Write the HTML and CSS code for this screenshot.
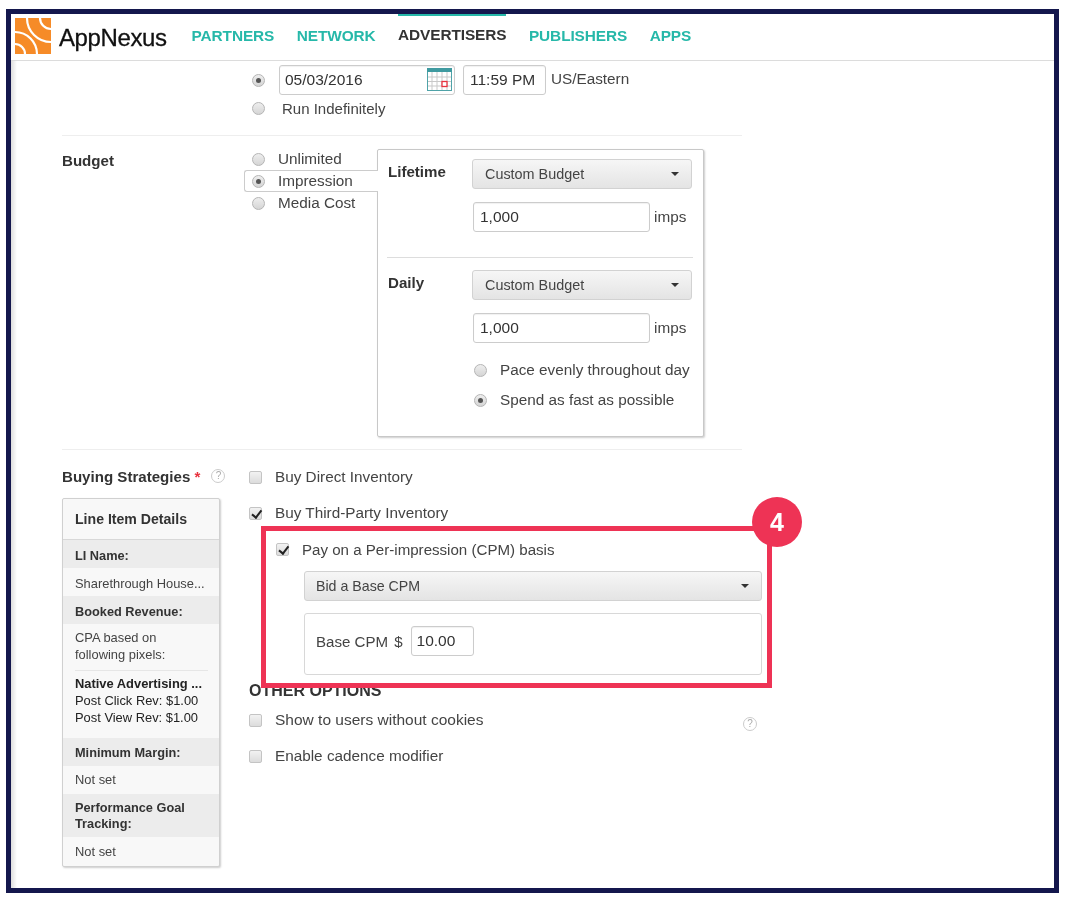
FILE: index.html
```html
<!DOCTYPE html>
<html lang="en">
<head>
<meta charset="utf-8">
<title>AppNexus</title>
<link rel="stylesheet" href="styles.css">
</head>
<body>
<div class="frame">
  <header class="topbar">
    <svg class="logo" viewBox="0 0 36 36" aria-hidden="true">
      <rect width="36" height="36" fill="#f68b28"/>
      <g fill="none" stroke="#fff" stroke-width="2.200">
        <path d="M25 0A11 11 0 0 0 36 11"/>
        <path d="M12 0A24 24 0 0 0 36 24"/>
        <path d="M0 26A10 10 0 0 1 10 36"/>
        <path d="M0 14A22 22 0 0 1 22 36"/>
      </g>
    </svg>
    <span class="brand">AppNexus</span>
    <nav class="nav">
      <a class="nav-link">PARTNERS</a>
      <a class="nav-link">NETWORK</a>
      <a class="nav-link active">ADVERTISERS</a>
      <a class="nav-link">PUBLISHERS</a>
      <a class="nav-link">APPS</a>
    </nav>
  </header>

  <main class="content">
    <section class="schedule">
      <div class="sched-line">
        <span class="radio on"></span>
        <div class="input date">05/03/2016
          <svg class="cal" viewBox="0 0 25 23" aria-hidden="true">
            <rect x=".5" y=".5" width="24" height="22" fill="#fff" stroke="#4fa3a8"/>
            <rect width="25" height="4" fill="#3f9aa0"/>
            <path d="M5 4v18M10 4v18M15 4v18M20 4v18M1 9h23M1 13.500h23M1 18h23" stroke="#c9c9c9" stroke-width="1"/>
            <rect x="15" y="13.500" width="5" height="5" fill="#fff" stroke="#e8333f" stroke-width="1.300"/>
          </svg>
        </div>
        <div class="input time">11:59 PM</div>
        <span class="tz">US/Eastern</span>
      </div>
      <div class="indef"><span class="radio"></span><span class="indef-label">Run Indefinitely</span></div>
    </section>

    <section class="budget">
      <h3 class="row-title budget-title">Budget</h3>
      <div class="budget-body">
        <div class="budget-types">
          <div class="type"><span class="radio"></span>Unlimited</div>
          <div class="type selected"><span class="radio on"></span>Impression</div>
          <div class="type"><span class="radio"></span>Media Cost</div>
        </div>
        <div class="panel">
          <div class="panel-group">
            <strong class="panel-label">Lifetime</strong>
            <div class="panel-fields">
              <div class="select wide">Custom Budget<span class="caret"></span></div>
              <div class="imps"><div class="input amount">1,000</div><span class="unit">imps</span></div>
            </div>
          </div>
          <hr class="panel-rule">
          <div class="panel-group">
            <strong class="panel-label">Daily</strong>
            <div class="panel-fields">
              <div class="select wide">Custom Budget<span class="caret"></span></div>
              <div class="imps"><div class="input amount">1,000</div><span class="unit">imps</span></div>
              <div class="pace first"><span class="radio"></span>Pace evenly throughout day</div>
              <div class="pace"><span class="radio on"></span>Spend as fast as possible</div>
            </div>
          </div>
        </div>
      </div>
    </section>

    <section class="strategies">
      <div class="side">
        <h3 class="row-title strat-title">Buying Strategies <span class="req">*</span><span class="help">?</span></h3>
        <aside class="details">
          <div class="details-head">Line Item Details</div>
          <div class="d-key d-low">LI Name:</div>
          <div class="d-val d-low">Sharethrough House...</div>
          <div class="d-key d-low">Booked Revenue:</div>
          <div class="d-val d-pixels">
            <div class="d-cpa">CPA based on<br>following pixels:</div>
            <div class="d-pixel"><b>Native Advertising ...</b><br>Post Click Rev: $1.00<br>Post View Rev: $1.00</div>
          </div>
          <div class="d-key">Minimum Margin:</div>
          <div class="d-val d-high">Not set</div>
          <div class="d-key d-two">Performance Goal Tracking:</div>
          <div class="d-val">Not set</div>
        </aside>
      </div>
      <div class="options">
        <label class="check"><span class="box"></span>Buy Direct Inventory</label>
        <label class="check"><span class="box on"></span>Buy Third-Party Inventory</label>
        <div class="cpm">
          <label class="check cpm-check"><span class="box on"></span>Pay on a Per-impression (CPM) basis</label>
          <div class="select full">Bid a Base CPM<span class="caret"></span></div>
          <div class="cpm-box">Base CPM<span class="dollar">$</span><div class="input cpm-input">10.00</div></div>
        </div>
        <h4 class="other">OTHER OPTIONS</h4>
        <div class="check-row">
          <label class="check cookies"><span class="box"></span>Show to users without cookies</label>
          <span class="help far">?</span>
        </div>
        <label class="check"><span class="box"></span>Enable cadence modifier</label>
      </div>
    </section>
  </main>

  <div class="callout"></div>
  <div class="badge">4</div>
</div>
</body>
</html>
```

FILE: styles.css
```css
* { box-sizing: border-box; }
html, body { margin: 0; height: 100%; background: #fff; }
body {
  padding: 9px 9px 9px 6px;
  font-family: "Liberation Sans", Arial, sans-serif;
  font-size: 14.400px;
  color: #444;
}
.frame {
  position: relative;
  width: 1053px;
  height: 884px;
  border: 5px solid #14174d;
  background: #fff;
  overflow: hidden;
  filter: blur(.3px);
}
.topbar {
  display: flex;
  align-items: center;
  height: 47px;
  padding-left: 4px;
  border-bottom: 1px solid #dcdcdc;
  box-shadow: 0 1px 2px rgba(0,0,0,.08);
  background: #fff;
}
.logo { width: 36px; height: 36px; flex: none; margin-top: -3px; }
.brand {
  margin-left: 8px;
  font-size: 24px;
  color: #111;
  letter-spacing: -.4px;
  margin-top: 1px;
  -webkit-text-stroke: .3px #111;
}
.nav { display: flex; margin-left: 25px; height: 100%; }
.nav-link {
  margin-right: 22.500px;
  padding-top: 11px;
  font-size: 15.400px;
  font-weight: 700;
  color: #26b8a9;
  border-top: 2px solid transparent;
  letter-spacing: -.1px;
}
.nav-link.active { color: #333; border-top-color: #26b8a9; padding-top: 10px; }

.content {
  height: 827px;
  padding-left: 51px;
  background: linear-gradient(to right, #dedede, #f4f4f4 4px, #fff 6px);
}

.radio {
  display: inline-block;
  flex: none;
  width: 13px;
  height: 13px;
  border-radius: 50%;
  border: 1px solid #b5b5b5;
  background: linear-gradient(#eee, #d5d5d5);
  position: relative;
}
.radio.on::after {
  content: "";
  position: absolute;
  left: 3px;
  top: 3px;
  width: 5px;
  height: 5px;
  border-radius: 50%;
  background: #555;
}
.input {
  background: #fff;
  border: 1px solid #ccc;
  border-radius: 3px;
  box-shadow: inset 0 1px 1px rgba(0,0,0,.06);
  color: #333;
  line-height: 28px;
  font-size: 15.500px;
}

.schedule {
  width: 680px;
  height: 75px;
  padding: 4px 0 0 190px;
  border-bottom: 1px solid #eee;
}
.sched-line { display: flex; align-items: center; height: 30px; }
.date { position: relative; width: 176px; height: 30px; margin-left: 14px; padding-left: 5px; }
.cal { position: absolute; right: 2px; top: 2px; width: 25px; height: 23px; }
.time { width: 83px; height: 30px; margin-left: 8px; padding-left: 6px; }
.tz { margin-left: 5px; font-size: 15.300px; margin-top: -2px; }
.indef { display: flex; align-items: center; height: 18px; margin-top: 4px; font-size: 15px; }
.indef-label { margin-left: 17px; }

.row-title { margin: 0; font-size: 15.100px; font-weight: 700; color: #333; }
.budget {
  display: flex;
  width: 680px;
  height: 314px;
  padding-top: 12px;
  border-bottom: 1px solid #eee;
}
.budget-title { width: 182px; padding-top: 4px; }
.budget-types { width: 134px; position: relative; z-index: 1; margin-right: -1px; }
.budget-body { display: flex; align-items: flex-start; }
.type {
  display: flex;
  align-items: center;
  height: 22px;
  padding-left: 7px;
  gap: 13px;
  font-size: 15.300px;
  border: 1px solid transparent;
  border-right: 0;
}
.type.selected { border-color: #ccc; border-radius: 3px 0 0 3px; background: #fff; }
.panel {
  width: 327px;
  height: 288px;
  margin-top: 1px;
  padding: 9px 11px 0 10px;
  border: 1px solid #c8c8c8;
  border-radius: 2px;
  box-shadow: 1px 1px 2px rgba(0,0,0,.2);
  background: #fff;
}
.panel-group { display: flex; }
.panel-label { width: 84px; padding-top: 4px; color: #333; font-size: 15.100px; }
.panel-fields { width: 220px; }
.select {
  position: relative;
  height: 30px;
  line-height: 29px;
  padding-left: 12px;
  border: 1px solid #d2d2d2;
  border-radius: 3px;
  background: linear-gradient(#f6f6f6, #e4e4e4);
  color: #444;
}
.caret {
  position: absolute;
  right: 12px;
  top: 12px;
  border-left: 4px solid transparent;
  border-right: 4px solid transparent;
  border-top: 4px solid #333;
}
.imps { display: flex; align-items: center; margin: 13px 0 0 1px; }
.amount { width: 177px; height: 30px; padding-left: 6px; }
.unit { margin-left: 4px; font-size: 15.300px; }
.panel-rule { margin: 25px 0 12px -1px; border: 0; border-top: 1px solid #ddd; width: 306px; }
.pace { display: flex; align-items: center; gap: 13px; height: 30px; margin-left: 2px; font-size: 15.300px; white-space: nowrap; }
.pace.first { margin-top: 12px; }

.strategies { display: flex; width: 700px; padding-top: 17px; }
.side { width: 187px; }
.strat-title { display: flex; align-items: center; height: 18px; white-space: pre; }
.req { color: #e8333f; }
.help {
  display: inline-block;
  width: 14px;
  height: 14px;
  line-height: 12px;
  margin-left: 11px;
  border: 1px solid #ccc;
  border-radius: 50%;
  color: #aaa;
  font-size: 10px;
  font-weight: 400;
  text-align: center;
}
.details {
  width: 158px;
  height: 369px;
  margin-top: 13px;
  border: 1px solid #d0d0d0;
  border-radius: 2px;
  box-shadow: 1px 1px 2px rgba(0,0,0,.2);
  background: #f8f8f8;
  font-size: 12.900px;
  color: #444;
  overflow: hidden;
}
.details-head { height: 41px; padding: 12px 0 0 12px; border-bottom: 1px solid #d8d8d8; font-size: 14.100px; font-weight: 700; color: #333; }
.d-key { height: 28px; padding: 7px 12px 0; background: #ececec; font-weight: 700; font-size: 12.750px; color: #333; }
.d-val { height: 28px; padding: 7px 12px 0; white-space: nowrap; }
.d-low { padding-top: 8px; }
.d-high { padding-top: 6px; }
.d-two { height: 43px; padding-top: 6px; line-height: 16px; }
.d-pixels { height: 114px; padding-top: 5px; line-height: 17px; }
.d-cpa { padding-bottom: 7px; border-bottom: 1px solid #e6e6e6; width: 133px; }
.d-pixel { padding-top: 4px; color: #222; }

.options { width: 512px; }
.check { display: flex; align-items: center; height: 36px; font-size: 15.300px; gap: 13px; padding-bottom: 16px; color: #444; }
.box {
  position: relative;
  flex: none;
  width: 13px;
  height: 13px;
  border: 1px solid #c4c4c4;
  border-radius: 2px;
  background: linear-gradient(#f2f2f2, #dcdcdc);
}
.box.on::after {
  content: "";
  position: absolute;
  left: 4px;
  top: 0;
  width: 3.500px;
  height: 7.500px;
  border: solid #222;
  border-width: 0 2px 2px 0;
  transform: rotate(38deg);
}
.cpm { padding-left: 27px; }
.check.cpm-check { height: 22px; padding-bottom: 0; margin-top: -1px; font-size: 15.100px; }
.check.cookies { font-size: 15.500px; }
.select.full { width: 458px; margin-left: 28px; margin-top: 11px; padding-left: 11px; font-size: 14.200px; }
.cpm-box {
  display: flex;
  align-items: center;
  width: 458px;
  height: 62px;
  margin: 12px 0 0 28px;
  padding: 0 0 6px 11px;
  border: 1px solid #d8d8d8;
  border-radius: 3px;
  font-size: 15.100px;
}
.dollar { margin-left: 6px; }
.cpm-input { width: 63px; height: 30px; margin-left: 8px; padding-left: 5px; }
.other { margin: 7px 0 0; height: 28px; font-size: 16px; font-weight: 700; color: #333; line-height: 18px; }
.check-row { display: flex; justify-content: space-between; width: 508px; }
.help.far { margin-top: 7px; }

.callout {
  position: absolute;
  left: 250px;
  top: 512px;
  width: 511px;
  height: 162px;
  border: 5px solid #ee3355;
}
.badge {
  position: absolute;
  left: 741px;
  top: 483px;
  width: 50px;
  height: 50px;
  border-radius: 50%;
  background: #ee3355;
  color: #fff;
  font-size: 25px;
  font-weight: 700;
  line-height: 50px;
  text-align: center;
}
```
